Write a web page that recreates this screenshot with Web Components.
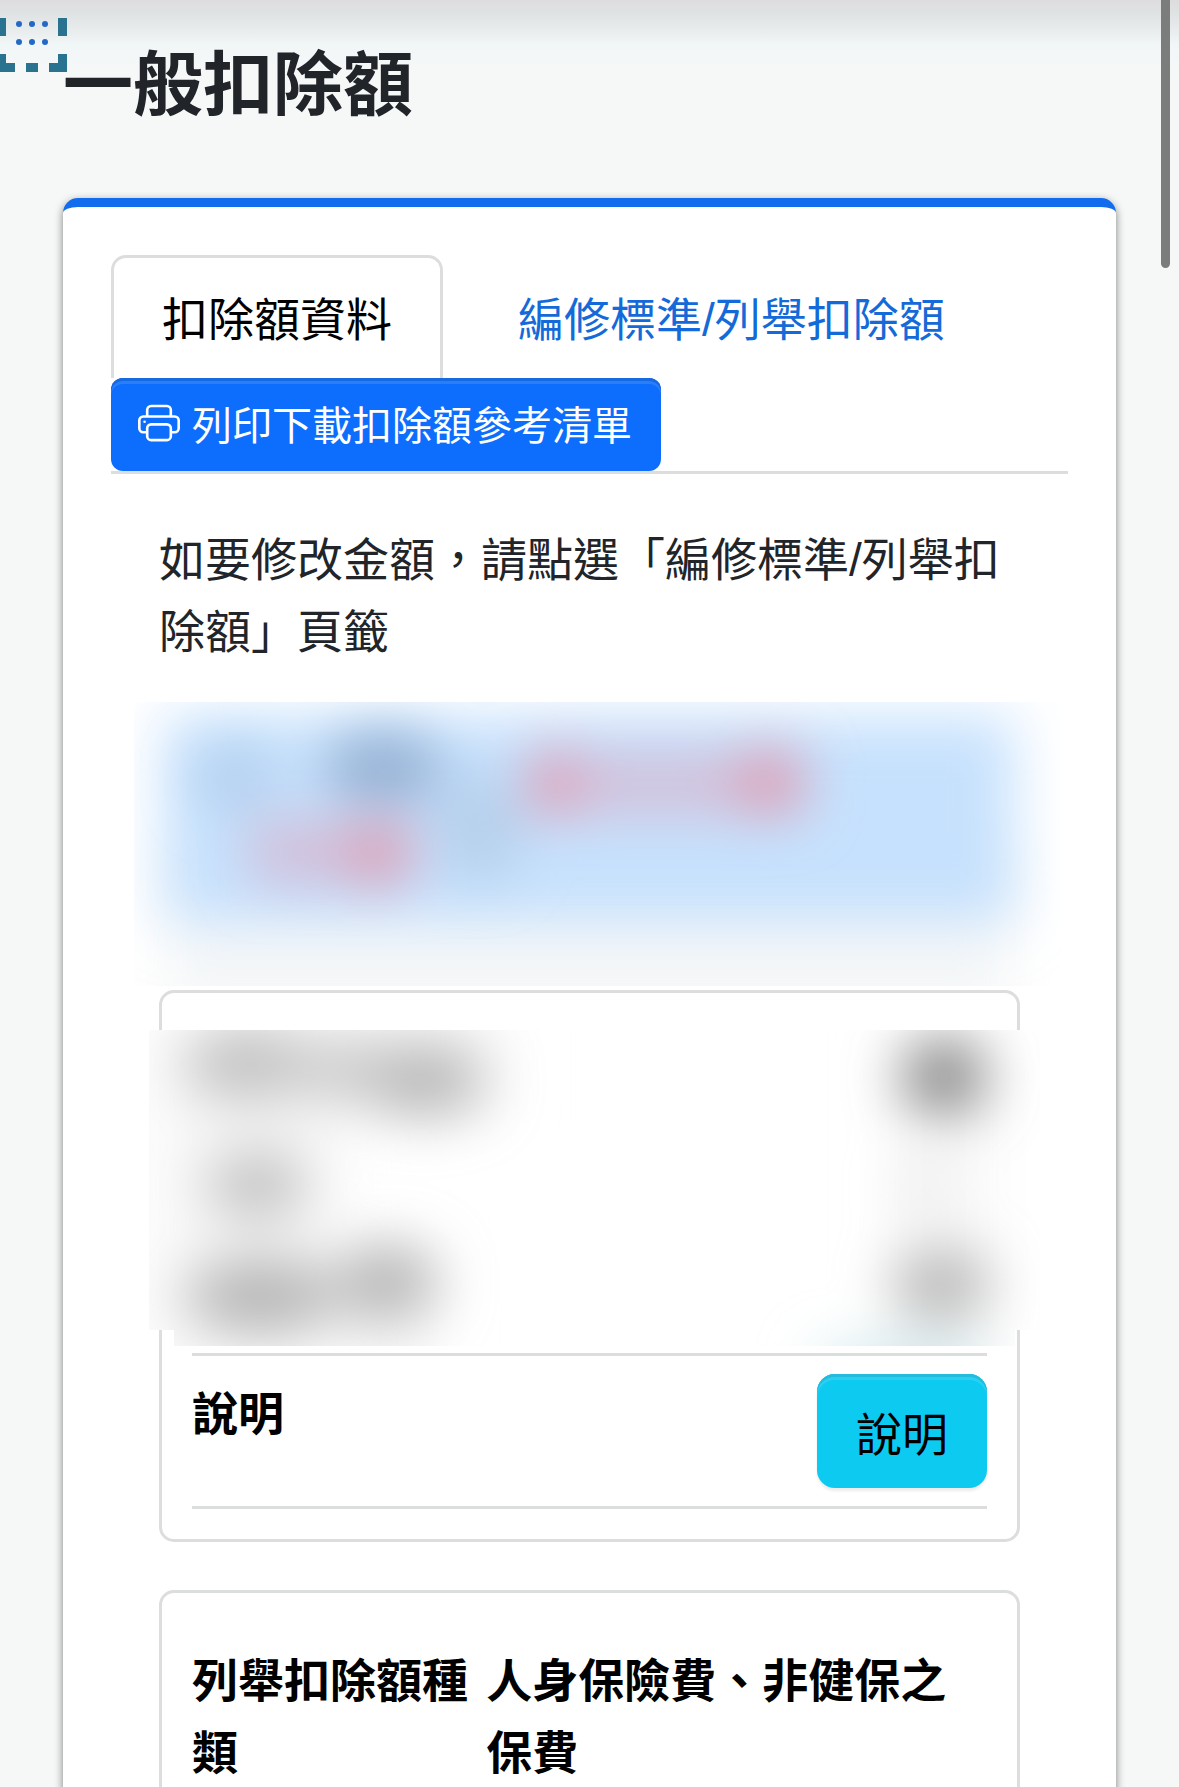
<!DOCTYPE html>
<html lang="zh-Hant">
<head>
<meta charset="utf-8">
<meta name="viewport" content="width=device-width, initial-scale=1">
<title>一般扣除額</title>
<style>
	html, body {
		margin: 0;
		background: #f6f8f8;
	}

	body {
		--line: #dcdddd;
		--blue: #0d6efd;
		--latin-first: "Liberation Sans", "Noto Sans CJK TC", sans-serif;
		font-family: "Noto Sans CJK TC", "Liberation Sans", sans-serif;
		font-size: 46px;
		line-height: 72px;
		color: #212529;
	}

	p {
		margin: 0;
		padding-top: 2px;
		font-family: var(--latin-first);
	}
</style>
</head>
<body>
<tax-page>
	<frame-mark slot="mark"></frame-mark>
	<span slot="title">一般扣除額</span>
	<deduction-tabs></deduction-tabs>
	<tab-content>
		<p>如要修改金額，請點選「編修標準/列舉扣除額」頁籤</p>
		<blurred-notice></blurred-notice>
		<detail-card>
			<blurred-rows></blurred-rows>
			<detail-row>
				<span slot="label">說明</span>
				<info-button>說明</info-button>
			</detail-row>
		</detail-card>
		<detail-card>
			<detail-row>
				<span slot="label">列舉扣除額種類</span>
				<b>人身保險費、非健保之保費</b>
			</detail-row>
			<detail-row></detail-row>
		</detail-card>
	</tab-content>
</tax-page>

<script>
function define(name, html) {
	const template = document.createElement('template');
	template.innerHTML = html;

	customElements.define(name, class extends HTMLElement {
		connectedCallback() {
			if (this.shadowRoot) return;
			const shadowRoot = this.attachShadow({ mode: 'open' });
			shadowRoot.appendChild(template.content.cloneNode(true));
		}
	});
}

// Page frame: title, main panel and scroll thumb
define('tax-page', `
<style>
	:host {
		display: block;
		position: relative;
		box-sizing: border-box;
		height: 100vh;
		overflow: hidden;
		padding: 38px 63px 0;
		background: linear-gradient(#dedcde 0, #dfe2e2 12px, #eaeded 32px, #f1f6f7 44px, #f6f8f8 70px);
	}

	h1 {
		margin: 0 0 76px;
		font-size: 70px;
		line-height: 84px;
		font-weight: 700;
	}

	main {
		border-top: 9px solid #116dee;
		border-radius: 15px;
		padding: 48px;
		background: #fff;
		box-shadow: 0 3px 8px rgba(0, 0, 0, 0.5);
	}

	.thumb {
		position: absolute;
		top: 0;
		right: 9px;
		width: 9px;
		height: 268px;
		border-radius: 0 0 5px 5px;
		background: #7b7d7d;
	}
</style>
<slot name="mark"></slot>
<h1><slot name="title"></slot></h1>
<main><slot></slot></main>
<div class="thumb"></div>
`);

define('frame-mark', `
<style>
	:host {
		display: block;
		position: absolute;
		top: 18px;
		left: 0;
	}

	svg {
		display: block;
	}
</style>
<svg width="67" height="54" viewBox="0 0 67 54" aria-hidden="true">
	<path fill="#297391" d="M0 0h6v18H0zM58 0h9v18h-9zM0 36h6v9h9v9H0zM26 45h12v9H26zM49 45h9v-9h9v18H49z"/>
	<g fill="#2468c8">
		<circle cx="19" cy="6" r="3"/><circle cx="32" cy="6" r="3"/><circle cx="45" cy="6" r="3"/>
		<circle cx="19" cy="24" r="3"/><circle cx="32" cy="24" r="3"/><circle cx="45" cy="24" r="3"/>
	</g>
</svg>
`);

define('deduction-tabs', `
<style>
	:host {
		display: block;
	}

	nav {
		display: flex;
		flex-wrap: wrap;
		column-gap: 24px;
		border-bottom: 3px solid var(--line);
	}

	a {
		padding: 26px 48px 22px;
		border: 3px solid transparent;
		border-bottom: 0;
		border-radius: 15px 15px 0 0;
		color: #146ad8;
		font-family: var(--latin-first);
		text-decoration: none;
	}

	a.active {
		border-color: var(--line);
		color: #000;
	}

	button {
		display: flex;
		align-items: center;
		gap: 12px;
		padding: 15px 29px 18px 27px;
		border: 0;
		border-radius: 12px;
		background: var(--blue);
		box-shadow: inset 0 3px 0 #1769e0, inset 0 6px 0 #2a7efa;
		color: #fff;
		font: inherit;
		font-size: 40px;
		line-height: 60px;
	}
</style>
<nav>
	<a href="#data" class="active">扣除額資料</a>
	<a href="#edit">編修標準/列舉扣除額</a>
	<button type="button">
		<svg width="42" height="42" viewBox="0 0 16 16" fill="currentColor" aria-hidden="true">
			<path d="M2.5 8a.5.5 0 1 0 0-1 .5.5 0 0 0 0 1"/>
			<path d="M5 1a2 2 0 0 0-2 2v2H2a2 2 0 0 0-2 2v3a2 2 0 0 0 2 2h1v1a2 2 0 0 0 2 2h6a2 2 0 0 0 2-2v-1h1a2 2 0 0 0 2-2V7a2 2 0 0 0-2-2h-1V3a2 2 0 0 0-2-2zM4 3a1 1 0 0 1 1-1h6a1 1 0 0 1 1 1v2H4zm1 5a2 2 0 0 0-2 2v1H2a1 1 0 0 1-1-1V7a1 1 0 0 1 1-1h12a1 1 0 0 1 1 1v3a1 1 0 0 1-1 1h-1v-1a2 2 0 0 0-2-2zm7 2v3a1 1 0 0 1-1 1H5a1 1 0 0 1-1-1v-3a1 1 0 0 1 1-1h6a1 1 0 0 1 1 1"/>
		</svg>
		<span>列印下載扣除額參考清單</span>
	</button>
</nav>
`);

define('tab-content', `
<style>
	:host {
		display: block;
		padding: 48px 48px 0;
	}
</style>
<slot></slot>
`);

// Notice with its text blurred out
define('blurred-notice', `
<style>
	:host {
		display: block;
		margin: 34px -40px 4px -25px;
	}

	svg {
		display: block;
		width: 100%;
		height: 284px;
	}
</style>
<svg viewBox="0 0 926 284" preserveAspectRatio="none" aria-hidden="true">
	<defs>
		<filter id="soft" x="-30%" y="-40%" width="160%" height="180%"><feGaussianBlur stdDeviation="28"/></filter>
		<filter id="spot" x="-100%" y="-100%" width="300%" height="300%"><feGaussianBlur stdDeviation="26"/></filter>
	</defs>
	<rect x="36" y="140" width="840" height="250" fill="#f5f7f8" filter="url(#soft)"/>
	<rect x="30" y="14" width="850" height="206" fill="#c6e1fd" filter="url(#soft)"/>
	<g filter="url(#spot)">
		<ellipse cx="102" cy="76" rx="40" ry="34" fill="#b4d0ee"/>
		<ellipse cx="249" cy="66" rx="60" ry="36" fill="#95b1d3"/>
		<ellipse cx="345" cy="125" rx="44" ry="54" fill="#b6d0ec"/>
		<rect x="390" y="50" width="280" height="64" fill="#d2c2dc"/>
		<ellipse cx="421" cy="81" rx="26" ry="34" fill="#dfa0b6"/>
		<ellipse cx="635" cy="80" rx="38" ry="34" fill="#dca2b8"/>
		<rect x="116" y="118" width="166" height="64" fill="#d2c0da"/>
		<ellipse cx="243" cy="152" rx="36" ry="32" fill="#dca2b8"/>
	</g>
</svg>
`);

// Three rows of the card, blurred out; they also run over its side borders
define('blurred-rows', `
<style>
	:host {
		display: block;
		padding: 7px 0;
		border-bottom: 3px solid var(--line);
	}

	.cover {
		position: relative;
		margin: 0 -53px 0 -43px;
	}

	svg {
		display: block;
		width: 100%;
		height: 316px;
	}
</style>
<div class="cover">
	<svg viewBox="0 0 891 316" preserveAspectRatio="none" aria-hidden="true">
		<defs>
			<clipPath id="edge"><path d="M0 0h891v300h-25v16H25v-16H0z"/></clipPath>
			<filter id="wide" x="-50%" y="-50%" width="200%" height="200%"><feGaussianBlur stdDeviation="30"/></filter>
			<filter id="spot" x="-100%" y="-100%" width="300%" height="300%"><feGaussianBlur stdDeviation="28"/></filter>
		</defs>
		<g clip-path="url(#edge)">
			<rect width="891" height="316" fill="#fff"/>
			<g filter="url(#wide)" fill="#f8f8f8">
				<rect x="0" y="-10" width="190" height="350"/>
				<rect x="190" y="-40" width="160" height="130"/>
				<rect x="190" y="220" width="90" height="130"/>
				<rect x="750" y="-10" width="90" height="350"/>
			</g>
			<g filter="url(#spot)">
				<ellipse cx="100" cy="34" rx="66" ry="36" fill="#c0c0c0"/>
				<ellipse cx="190" cy="40" rx="60" ry="30" fill="#cacaca"/>
				<ellipse cx="276" cy="50" rx="60" ry="34" fill="#b4b4b4"/>
				<ellipse cx="795" cy="47" rx="42" ry="38" fill="#848484"/>
				<ellipse cx="108" cy="155" rx="50" ry="32" fill="#bebebe"/>
				<ellipse cx="774" cy="157" rx="20" ry="22" fill="#e4e4e4"/>
				<ellipse cx="112" cy="266" rx="76" ry="36" fill="#b2b2b2"/>
				<ellipse cx="238" cy="253" rx="50" ry="38" fill="#b4b4b4"/>
				<ellipse cx="792" cy="255" rx="48" ry="36" fill="#b6b6b6"/>
				<ellipse cx="752" cy="336" rx="90" ry="18" fill="#c4e2e8"/>
			</g>
		</g>
	</svg>
</div>
`);

define('detail-card', `
<style>
	:host {
		display: block;
		margin-bottom: 48px;
		padding: 30px;
		border: 3px solid var(--line);
		border-radius: 15px;
	}
</style>
<slot></slot>
`);

define('detail-row', `
<style>
	:host {
		display: flex;
		padding: 18px 0;
		border-bottom: 3px solid var(--line);
		color: #000;
	}

	.label {
		flex: 0 0 37%;
		font-weight: 700;
	}

	.value {
		flex: 1;
		display: flex;
		justify-content: flex-end;
	}
</style>
<div class="label"><slot name="label"></slot></div>
<div class="value"><slot></slot></div>
`);

define('info-button', `
<style>
	:host {
		display: block;
	}

	button {
		display: block;
		padding: 21px 39px;
		border: 0;
		border-radius: 18px;
		background: #0dcaf0;
		box-shadow: inset 0 3px 0 #24bbdc, inset 0 6px 0 #2ad0f2, 0 3px 3px rgba(0, 0, 0, 0.08);
		color: #000;
		font: inherit;
	}
</style>
<button type="button"><slot></slot></button>
`);
</script>
</body>
</html>
